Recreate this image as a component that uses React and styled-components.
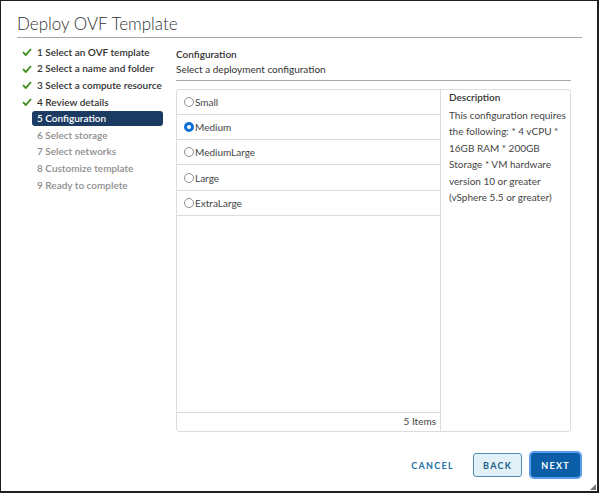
import React from "react";
import styled, { createGlobalStyle } from "styled-components";

const Global = createGlobalStyle`
  html, body { margin: 0; padding: 0; background: #fff; }
  body { font-family: "Lato", "Noto Sans", sans-serif; color: #333; }
`;

const Dialog = styled.div`
  width: 599px;
  height: 493px;
  box-sizing: border-box;
  border-style: solid;
  border-color: #1e1e1e;
  border-width: 1px 2px 2px 1px;
  padding: 13px 15px 0 16px;
  display: flex;
  flex-direction: column;
  position: relative;
  background: #fff;
`;

const Title = styled.h1`
  margin: 0;
  font-size: 17px;
  font-weight: 300;
  line-height: 20px;
  height: 20px;
  padding-bottom: 3px;
  color: #313131;
  border-bottom: 1px solid #a8a8a8;
`;

const Main = styled.div`
  display: flex;
  padding-top: 6px;
`;

const Sidebar = styled.ul`
  list-style: none;
  margin: 0;
  padding: 0;
  width: 146px;
  flex-shrink: 0;
`;

const Step = styled.li`
  display: flex;
  align-items: center;
  height: 16.6px;
  font-size: 10px;
  font-weight: 600;
  color: ${(p) => (p.$pending ? "#8e8e8e" : "#333")};
`;

const CheckCol = styled.span`
  width: 15px;
  display: flex;
  padding-left: 5px;
  box-sizing: border-box;
`;

const StepLabel = styled.span`
  flex: 1;
  height: 15px;
  line-height: 15px;
  padding-left: 5px;
  border-radius: 3px;
  background: ${(p) => (p.$active ? "#1c3b63" : "transparent")};
  color: ${(p) => (p.$active ? "#fff" : "inherit")};
  white-space: nowrap;
`;

const Content = styled.div`
  flex: 1;
  margin-left: 13px;
  margin-right: 11px;
  display: flex;
  flex-direction: column;
`;

const Heading = styled.div`
  font-size: 10px;
  font-weight: 600;
  line-height: 15px;
  margin-top: 2.5px;
`;

const Sub = styled.div`
  font-size: 10px;
  line-height: 15px;
  padding-bottom: 3.5px;
  border-bottom: 1px solid #a8a8a8;
`;

const Grid = styled.div`
  margin-top: 8px;
  height: 343px;
  border: 1px solid #dcdcdc;
  border-radius: 3px;
  display: flex;
  box-sizing: border-box;
`;

const ListCol = styled.div`
  width: 263px;
  border-right: 1px solid #dcdcdc;
  display: flex;
  flex-direction: column;
`;

const Row = styled.label`
  display: flex;
  align-items: center;
  height: 25.4px;
  box-sizing: border-box;
  border-bottom: 1px solid #dcdcdc;
  padding-left: 7px;
  font-size: 10px;
  color: #454545;
  &:first-child { height: 24.6px; }
`;

const Radio = styled.span`
  width: 10px;
  height: 10px;
  border-radius: 50%;
  box-sizing: border-box;
  margin-right: 1px;
  border: ${(p) => (p.$on ? "3px solid #0d6fd8" : "1px solid #8f8f8f")};
  background: #fff;
`;

const Spacer = styled.div`
  flex: 1;
`;

const Footer = styled.div`
  height: 18px;
  border-top: 1px solid #dcdcdc;
  font-size: 10px;
  line-height: 17px;
  text-align: right;
  padding-right: 4px;
  color: #454545;
`;

const DescCol = styled.div`
  flex: 1;
  padding: 0 3px 0 8px;
  font-size: 10px;
  line-height: 16.5px;
  color: #454545;
`;

const DescTitle = styled.div`
  font-weight: 600;
  color: #333;
  margin-top: -1px;
  margin-bottom: 1px;
`;

const Actions = styled.div`
  display: flex;
  justify-content: flex-end;
  align-items: center;
  gap: 9px;
  margin-top: 21px;
  margin-right: 2px;
`;

const Button = styled.button`
  font-family: inherit;
  font-size: 9px;
  font-weight: 700;
  letter-spacing: 1.3px;
  height: 24px;
  padding: 0 9px;
  border-radius: 3px;
  cursor: pointer;
  border: 1px solid ${(p) => (p.$kind === "primary" ? "#0b5ea6" : p.$kind === "outline" ? "#4f8db8" : "transparent")};
  background: ${(p) => (p.$kind === "primary" ? "#0b5ea6" : p.$kind === "outline" ? "#e2f1f7" : "transparent")};
  color: ${(p) => (p.$kind === "primary" ? "#fff" : p.$kind === "outline" ? "#1f5f8b" : "#1d6fa5")};
  box-shadow: ${(p) => (p.$focus ? "0 0 0 2px #5a9bea" : "none")};
`;

const Grip = styled.svg`
  position: absolute;
  right: 1px;
  bottom: 1px;
`;

const Check = () => (
  <svg width="10" height="8" viewBox="0 0 10 8">
    <path d="M1 4.2 L3.8 7 L9 1" fill="none" stroke="#3f8f1e" strokeWidth="1.9" />
  </svg>
);

const steps = [
  { n: 1, t: "Select an OVF template", done: true },
  { n: 2, t: "Select a name and folder", done: true },
  { n: 3, t: "Select a compute resource", done: true },
  { n: 4, t: "Review details", done: true },
  { n: 5, t: "Configuration", active: true },
  { n: 6, t: "Select storage" },
  { n: 7, t: "Select networks" },
  { n: 8, t: "Customize template" },
  { n: 9, t: "Ready to complete" },
];

const options = ["Small", "Medium", "MediumLarge", "Large", "ExtraLarge"];

export default function App() {
  return (
    <>
      <Global />
      <Dialog>
        <Title>Deploy OVF Template</Title>
        <Main>
          <Sidebar>
            {steps.map((s) => (
              <Step key={s.n} $pending={!s.done && !s.active}>
                <CheckCol>{s.done && <Check />}</CheckCol>
                <StepLabel $active={s.active}>
                  {s.n} {s.t}
                </StepLabel>
              </Step>
            ))}
          </Sidebar>
          <Content>
            <Heading>Configuration</Heading>
            <Sub>Select a deployment configuration</Sub>
            <Grid>
              <ListCol>
                {options.map((o) => (
                  <Row key={o}>
                    <Radio $on={o === "Medium"} />
                    {o}
                  </Row>
                ))}
                <Spacer />
                <Footer>5 Items</Footer>
              </ListCol>
              <DescCol>
                <DescTitle>Description</DescTitle>
                This configuration requires the following: * 4 vCPU * 16GB RAM * 200GB Storage * VM hardware version 10 or greater (vSphere 5.5 or greater)
              </DescCol>
            </Grid>
          </Content>
        </Main>
        <Actions>
          <Button $kind="flat">CANCEL</Button>
          <Button $kind="outline">BACK</Button>
          <Button $kind="primary" $focus>NEXT</Button>
        </Actions>
        <Grip width="6" height="6" viewBox="0 0 6 6">
          <path d="M6 0 L6 6 L0 6 Z" fill="#777" />
        </Grip>
      </Dialog>
    </>
  );
}
